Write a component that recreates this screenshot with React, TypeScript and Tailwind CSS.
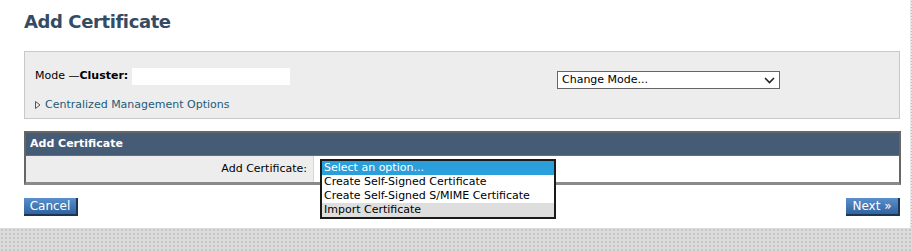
import React from 'react';

const font = "font-['DejaVu_Sans',Verdana,sans-serif]";

const options = [
  'Select an option...',
  'Create Self-Signed Certificate',
  'Create Self-Signed S/MIME Certificate',
  'Import Certificate',
];

export default function App() {
  return (
    <div className={`w-[912px] h-[251px] flex flex-col overflow-hidden ${font}`}>
      <div className="flex h-[228px]">
        <div className="w-[910px] bg-white pl-[24px] pr-[10px]">
          {/* Title */}
          <h1 className="pt-[10px] h-[51px] text-[18px] tracking-[-0.4px] font-bold text-[#354b63] leading-[24px]">
            Add Certificate
          </h1>

          {/* Mode panel */}
          <div className="h-[68px] border border-[#c8c8c8] bg-[#ededed] flex">
            <div className="w-[532px] pl-[10px] pt-[16px]">
              <div className="flex items-center h-[17px] text-[11px] text-black">
                <span>Mode —</span>
                <span className="font-bold">Cluster:</span>
                <span className="ml-[4px] w-[158px] h-[17px] bg-white" />
              </div>
              <div className="mt-[12px] flex items-center text-[11px] text-[#1d5a78]">
                <svg width="6" height="8" viewBox="0 0 6 8" className="mr-[4px]">
                  <path d="M0.5 0.5 L5 4 L0.5 7.5 Z" fill="none" stroke="#555" strokeWidth="1" />
                </svg>
                <span>Centralized Management Options</span>
              </div>
            </div>
            <div className="pt-[19px]">
              <div className="w-[223px] h-[18px] border border-[#666] bg-white flex items-center justify-between pl-[4px] pr-[4px] text-[11px] text-black">
                <span>Change Mode...</span>
                <svg width="11" height="7" viewBox="0 0 11 7">
                  <path d="M1 1 L5.5 5.5 L10 1" fill="none" stroke="#222" strokeWidth="1.6" />
                </svg>
              </div>
            </div>
          </div>

          {/* Add Certificate section */}
          <div className="mt-[12px] w-[877px] border-2 border-[#666] border-b-[3px] border-b-[#8a8a8a]">
            <div className="h-[23px] bg-[#465b75] text-white text-[11px] font-bold pl-[4px] flex items-center border-b border-[#5d6f86]">
              Add Certificate
            </div>
            <div className="flex h-[26px]">
              <div className="w-[288px] bg-[#ededed] border-r border-[#d6d6d6] text-[11px] text-black flex items-center justify-end pr-[6px]">
                Add Certificate:
              </div>
              <div className="flex-1 bg-white relative">
                <div className="absolute left-[6px] top-[3px] w-[236px] border-2 border-[#1a1a1a] bg-white z-10 text-[11px] leading-[14px]">
                  {options.map((o, i) => (
                    <div
                      key={o}
                      className={
                        i === 0
                          ? 'bg-[#2b9fdb] text-white pl-[2px]'
                          : i === 3
                          ? 'bg-[#dedede] text-black pl-[2px]'
                          : 'text-black pl-[2px]'
                      }
                    >
                      {o}
                    </div>
                  ))}
                </div>
              </div>
            </div>
          </div>

          {/* Buttons */}
          <div className="mt-[13px] w-[876px] flex justify-between">
            <button className="h-[18px] w-[54px] bg-gradient-to-b from-[#5a8fcb] to-[#2f64a0] border-r-2 border-b-2 border-[#1c3552] text-white text-[12px] leading-[14px] flex items-center justify-center">
              Cancel
            </button>
            <button className="h-[18px] w-[54px] bg-gradient-to-b from-[#5a8fcb] to-[#2f64a0] border-r-2 border-b-2 border-[#1c3552] text-white text-[12px] leading-[14px] flex items-center justify-center">
              Next »
            </button>
          </div>
        </div>
        <div className="w-[2px] bg-[#e6e6e6] bg-[radial-gradient(#bdbdbd_1px,transparent_1px)] bg-[length:3px_3px]" />
      </div>
      <div className="flex-1 bg-[#dcdcdc] bg-[radial-gradient(#c6c6c6_0.8px,transparent_0.8px)] bg-[length:4px_4px]" />
    </div>
  );
}
